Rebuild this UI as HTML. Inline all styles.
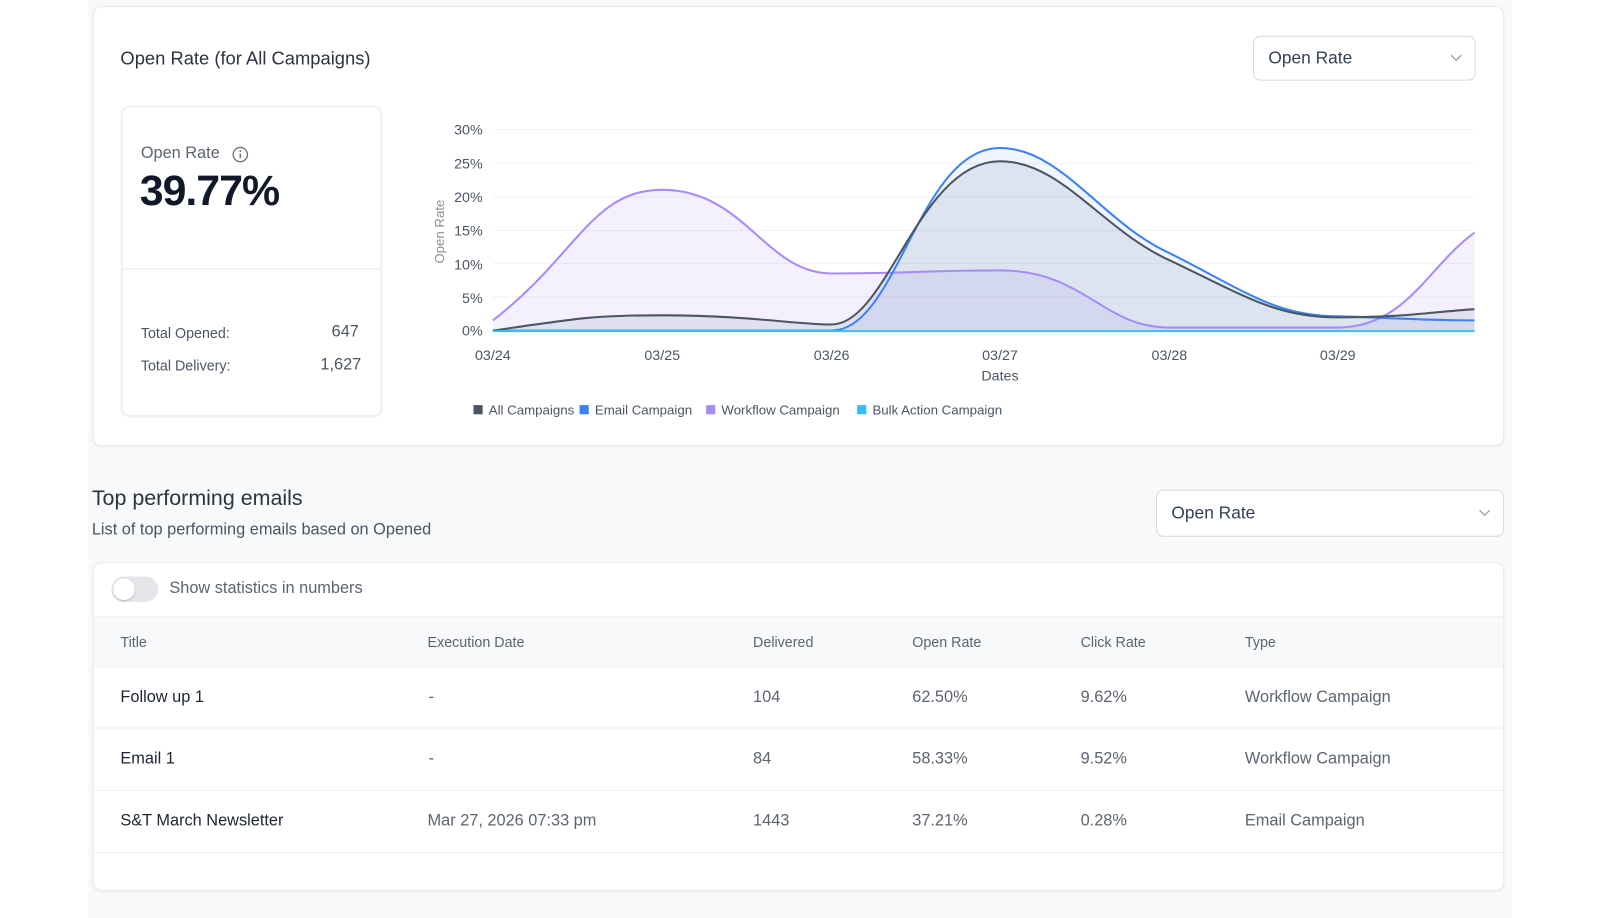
<!DOCTYPE html>
<html><head><meta charset="utf-8"><style>
*{box-sizing:border-box;margin:0;padding:0}
body{width:1600px;height:900px;background:#fff;font-family:"Liberation Sans",sans-serif;position:relative;overflow:hidden;color:#344054}
#w{position:absolute;left:0;top:0;width:1568px;height:882px;transform:scale(1.0204);transform-origin:0 0}
.bg{position:absolute;left:86px;top:0;width:1396px;height:900px;background:#f8f9fb}
.card{position:absolute;background:#fff;border:1px solid #e8eaed;border-radius:8px;box-shadow:0 1px 2px rgba(0,0,0,.05)}
.sel{position:absolute;background:#fff;border:1px solid #d6d9de;border-radius:7px;font-size:17px;color:#344054;padding-left:14px;display:flex;align-items:center}
.sel svg{position:absolute;right:12px;top:50%;margin-top:-4px}
.abs{position:absolute;white-space:nowrap}
.th{position:absolute;font-size:14px;color:#5b6470}
.td{position:absolute;font-size:16px;color:#5b6470}
.tt{position:absolute;font-size:16px;color:#1d2433}
</style></head><body><div id="w">
<div class="bg"></div>
<div class="card" style="left:91px;top:6px;width:1383px;height:431px"></div>
<div class="abs" style="left:118px;top:47px;font-size:18px;color:#2d3340">Open Rate (for All Campaigns)</div>
<div class="sel" style="left:1228px;top:35px;width:218px;height:44px">Open Rate<svg width="12" height="8" viewBox="0 0 12 8"><path d="M1 1l5 5 5-5" fill="none" stroke="#9aa1ab" stroke-width="1.3"/></svg></div>
<div class="card" style="left:119px;top:104px;width:255px;height:304px;border-color:#e6e8eb"></div>
<div class="abs" style="left:120px;top:263px;width:253px;height:1px;background:#e6e8eb"></div>
<div class="abs" style="left:138px;top:142px;font-size:16px;color:#5b6470">Open Rate</div>
<svg class="abs" style="left:227px;top:143px" width="17" height="17" viewBox="0 0 17 17"><circle cx="8.5" cy="8.5" r="7" fill="none" stroke="#6b7280" stroke-width="1.3"/><path d="M8.5 7.5v4.5" stroke="#6b7280" stroke-width="1.4"/><circle cx="8.5" cy="5.2" r="0.9" fill="#6b7280"/></svg>
<div class="abs" style="left:137px;top:163px;font-size:42px;font-weight:bold;color:#111827;letter-spacing:-1px">39.77%</div>
<div class="abs" style="left:138px;top:318px;font-size:14px;color:#4b5563">Total Opened:</div>
<div class="abs" style="left:325px;top:317px;font-size:16px;color:#4b5563">647</div>
<div class="abs" style="left:138px;top:350px;font-size:14px;color:#4b5563">Total Delivery:</div>
<div class="abs" style="left:314px;top:349px;font-size:16px;color:#4b5563">1,627</div>

<svg class="abs" style="left:0;top:0" width="1600" height="440" viewBox="0 0 1600 440" font-family="Liberation Sans, sans-serif">
<g stroke="#f0f1f3" stroke-width="1">
<line x1="483" y1="127" x2="1445" y2="127"/><line x1="483" y1="160" x2="1445" y2="160"/><line x1="483" y1="193" x2="1445" y2="193"/><line x1="483" y1="226" x2="1445" y2="226"/><line x1="483" y1="258" x2="1445" y2="258"/><line x1="483" y1="291" x2="1445" y2="291"/>
</g>
<g font-size="14" fill="#4b5563" text-anchor="end">
<text x="473" y="132">30%</text><text x="473" y="165">25%</text><text x="473" y="198">20%</text><text x="473" y="231">15%</text><text x="473" y="264">10%</text><text x="473" y="297">5%</text><text x="473" y="329">0%</text>
</g>
<text transform="translate(435,227) rotate(-90)" font-size="13" fill="#8a9099" text-anchor="middle">Open Rate</text>
<g font-size="14" fill="#4b5563" text-anchor="middle">
<text x="483" y="353">03/24</text><text x="649" y="353">03/25</text><text x="815" y="353">03/26</text><text x="980" y="353">03/27</text><text x="1146" y="353">03/28</text><text x="1311" y="353">03/29</text>
<text x="980" y="373" font-size="14">Dates</text>
</g>
<path d="M483,314 C566,250 580,186 649,186 C730,186 750,268 815,268 C898,268 898,265 980,265 C1063,265 1080,321 1146,321 C1229,321 1229,321 1311,321 C1378,321 1400,260 1445,228 L1445,324 L483,324Z" fill="#a78bfa" fill-opacity="0.13"/>
<path d="M483,324 C566,312 580,309 649,309 C732,309 780,318 815,318 C870,318 900,158 980,158 C1040,158 1080,225 1146,255 C1220,290 1250,311 1311,311 C1378,311 1400,306 1445,303 L1445,324 L483,324Z" fill="#64748b" fill-opacity="0.13"/>
<path d="M815,324 C880,324 900,145 980,145 C1040,145 1080,218 1146,248 C1220,285 1250,310 1311,310 C1378,312 1400,314 1445,314 L1445,324Z" fill="#3b82f6" fill-opacity="0.08"/>
<path d="M483,314 C566,250 580,186 649,186 C730,186 750,268 815,268 C898,268 898,265 980,265 C1063,265 1080,321 1146,321 C1229,321 1229,321 1311,321 C1378,321 1400,260 1445,228" fill="none" stroke="#a78bfa" stroke-width="2"/>
<path d="M483,324 L815,324 C880,324 900,145 980,145 C1040,145 1080,218 1146,248 C1220,285 1250,310 1311,310 C1378,312 1400,314 1445,314" fill="none" stroke="#3b82f6" stroke-width="2"/>
<path d="M483,324 C566,312 580,309 649,309 C732,309 780,318 815,318 C870,318 900,158 980,158 C1040,158 1080,225 1146,255 C1220,290 1250,311 1311,311 C1378,311 1400,306 1445,303" fill="none" stroke="#4b5563" stroke-width="2"/>
<line x1="483" y1="324.5" x2="1445" y2="324.5" stroke="#38bdf8" stroke-width="2"/>
<g font-size="13" fill="#4b5563">
<rect x="464" y="397" width="9" height="9" fill="#4b5563"/><text x="479" y="406">All Campaigns</text>
<rect x="568" y="397" width="9" height="9" fill="#3b82f6"/><text x="583" y="406">Email Campaign</text>
<rect x="692" y="397" width="9" height="9" fill="#a78bfa"/><text x="707" y="406">Workflow Campaign</text>
<rect x="840" y="397" width="9" height="9" fill="#38bdf8"/><text x="855" y="406">Bulk Action Campaign</text>
</g>
</svg>

<div class="abs" style="left:90px;top:477px;font-size:21px;color:#2d3340">Top performing emails</div>
<div class="abs" style="left:90px;top:511px;font-size:16px;color:#4b5563">List of top performing emails based on Opened</div>
<div class="sel" style="left:1133px;top:480px;width:341px;height:46px">Open Rate<svg width="12" height="8" viewBox="0 0 12 8"><path d="M1 1l5 5 5-5" fill="none" stroke="#9aa1ab" stroke-width="1.3"/></svg></div>

<div class="card" style="left:91px;top:551px;width:1383px;height:322px"></div>
<div class="abs" style="left:109px;top:565px;width:46px;height:25px;border-radius:13px;background:#e4e6ea"></div>
<div class="abs" style="left:111px;top:567px;width:21px;height:21px;border-radius:50%;background:#fff;box-shadow:0 1px 2px rgba(0,0,0,.2)"></div>
<div class="abs" style="left:166px;top:568px;font-size:16px;color:#5b6470">Show statistics in numbers</div>
<div class="abs" style="left:92px;top:604px;width:1381px;height:50px;background:#f8f9fb;border-top:1px solid #eceef1;border-bottom:1px solid #eceef1"></div>
<div class="th" style="left:118px;top:621px">Title</div>
<div class="th" style="left:419px;top:621px">Execution Date</div>
<div class="th" style="left:738px;top:621px">Delivered</div>
<div class="th" style="left:894px;top:621px">Open Rate</div>
<div class="th" style="left:1059px;top:621px">Click Rate</div>
<div class="th" style="left:1220px;top:621px">Type</div>
<div class="abs" style="left:92px;top:713px;width:1381px;height:1px;background:#eceef1"></div>
<div class="abs" style="left:92px;top:774px;width:1381px;height:1px;background:#eceef1"></div>
<div class="abs" style="left:92px;top:835px;width:1381px;height:1px;background:#eceef1"></div>

<div class="tt" style="left:118px;top:675px">Follow up 1</div>
<div class="td" style="left:420px;top:675px">-</div>
<div class="td" style="left:738px;top:675px">104</div>
<div class="td" style="left:894px;top:675px">62.50%</div>
<div class="td" style="left:1059px;top:675px">9.62%</div>
<div class="td" style="left:1220px;top:675px">Workflow Campaign</div>

<div class="tt" style="left:118px;top:735px">Email 1</div>
<div class="td" style="left:420px;top:735px">-</div>
<div class="td" style="left:738px;top:735px">84</div>
<div class="td" style="left:894px;top:735px">58.33%</div>
<div class="td" style="left:1059px;top:735px">9.52%</div>
<div class="td" style="left:1220px;top:735px">Workflow Campaign</div>

<div class="tt" style="left:118px;top:796px">S&amp;T March Newsletter</div>
<div class="td" style="left:419px;top:796px">Mar 27, 2026 07:33 pm</div>
<div class="td" style="left:738px;top:796px">1443</div>
<div class="td" style="left:894px;top:796px">37.21%</div>
<div class="td" style="left:1059px;top:796px">0.28%</div>
<div class="td" style="left:1220px;top:796px">Email Campaign</div>
</div></body></html>
